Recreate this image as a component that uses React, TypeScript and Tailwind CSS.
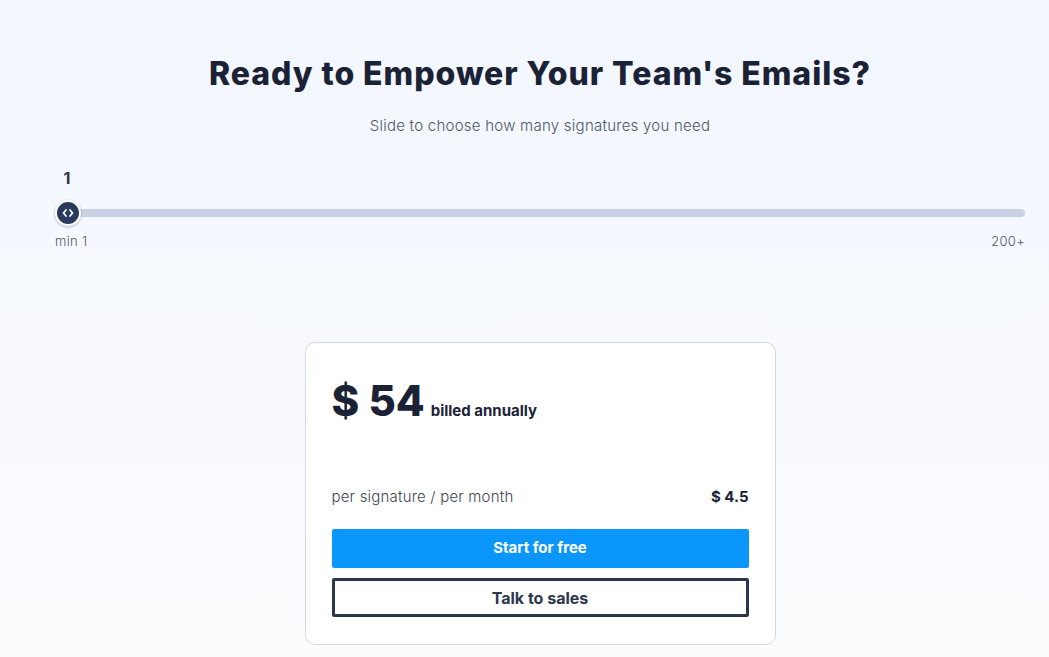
import { useState } from "react";

export default function App() {
  const [count, setCount] = useState(1);
  const pct = ((count - 1) / 199) * 100;

  return (
    <div
      className="min-h-screen w-full bg-gradient-to-b from-[#f2f6fe] to-[#fbfcfe] text-[#1b2236]"
      style={{ fontFamily: "Inter, 'Open Sans', sans-serif" }}
    >
      <div className="pl-[55px] pr-[24px] pt-[54px]">
        {/* Heading */}
        <h1 className="text-center text-[32px] leading-[40px] font-extrabold tracking-[0.95px] text-[#1b2236]">
          Ready to Empower Your Team's Emails?
        </h1>
        <p className="mt-[22px] text-center text-[15px] leading-[20px] font-light tracking-[0.25px] text-[#4f5668]">
          Slide to choose how many signatures you need
        </p>

        {/* Slider */}
        <div className="mt-[30px]">
          <div className="relative h-[20px]">
            <span
              className="absolute top-0 -translate-x-1/2 text-[16px] font-bold text-[#2b3448]"
              style={{ left: `calc(12px + ${pct}% * 0.97)` }}
            >
              {count}
            </span>
          </div>
          <div className="relative mt-[15px] h-[24px] flex items-center">
            <div className="h-[8px] w-full rounded-full bg-[#c9d1e4] ml-[6px]" />
            <div
              className="absolute top-0 w-[26px] h-[26px] -mt-[1px] rounded-full bg-[#293a5e] border-2 border-white shadow-[0_1px_3px_rgba(20,30,60,0.3)] flex items-center justify-center"
              style={{ left: `calc(${pct}% * 0.97)` }}
            >
              <svg width="12" height="10" viewBox="0 0 12 10" fill="none" stroke="white" strokeWidth="1.8" strokeLinecap="round" strokeLinejoin="round">
                <path d="M4 2 1.5 5 4 8" />
                <path d="M8 2l2.5 3L8 8" />
              </svg>
            </div>
            <input
              type="range"
              min={1}
              max={200}
              value={count}
              onChange={(e) => setCount(Number(e.target.value))}
              className="absolute inset-0 w-full opacity-0 cursor-pointer"
            />
          </div>
          <div className="mt-[7px] flex justify-between text-[13px] font-light tracking-[0.3px] text-[#4f5668]">
            <span>min 1</span>
            <span>200+</span>
          </div>
        </div>

        {/* Pricing card */}
        <div className="mt-[90px] flex justify-center">
          <div className="w-[471px] rounded-[10px] border border-[#d3d8e0] bg-white px-[26px] pt-[34px] pb-[27px]">
            <div className="flex items-baseline gap-[6px]">
              <span className="text-[42px] leading-[48px] font-extrabold text-[#1b2236]">$ {count * 54}</span>
              <span className="text-[15px] font-bold text-[#1b2236]">billed annually</span>
            </div>
            <div className="mt-[61px] flex items-center justify-between text-[15px]">
              <span className="font-light tracking-[0.2px] text-[#3f4656]">per signature / per month</span>
              <span className="font-bold text-[#1b2236]">$ 4.5</span>
            </div>
            <button className="mt-[21px] h-[39px] w-full rounded-[2px] bg-[#0a96fa] text-[15px] font-bold text-white">
              Start for free
            </button>
            <button className="mt-[10px] h-[39px] w-full rounded-[2px] border-[3px] border-[#2c374f] bg-white text-[16px] font-bold text-[#2c374f]">
              Talk to sales
            </button>
          </div>
        </div>
      </div>
    </div>
  );
}
